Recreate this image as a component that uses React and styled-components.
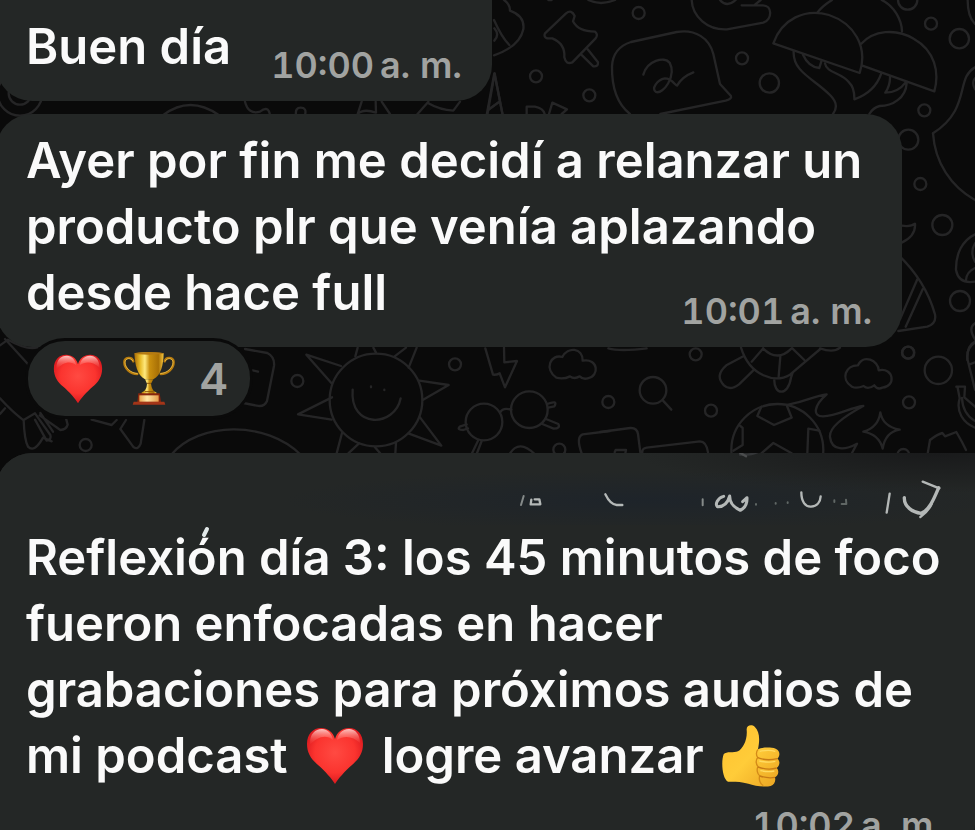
import React from "react";
import styled, { createGlobalStyle } from "styled-components";

const GlobalStyle = createGlobalStyle`
  * { box-sizing: border-box; }
  body {
    margin: 0;
    background: #0a0a0a;
    font-family: Inter, "Liberation Sans", sans-serif;
  }
`;

const Chat = styled.main`
  position: relative;
  height: 100vh;
  overflow: hidden;
  background: #0a0a0a;
`;

const Wallpaper = styled.svg`
  position: absolute;
  top: 0;
  left: 0;
  fill: none;
  stroke: #252526;
  stroke-width: 7;
  stroke-linecap: round;
  stroke-linejoin: round;
`;

const MessageList = styled.div`
  position: relative;
  display: flex;
  flex-direction: column;
  align-items: flex-start;
  margin-left: -4px;
`;

const Bubble = styled.article`
  position: relative;
  display: ${(p) => (p.$inline ? "flex" : "grid")};
  align-items: end;
  gap: ${(p) => (p.$inline ? "40px" : "0")};
  max-width: 100%;
  margin-top: ${(p) => (p.$first ? "0" : "13px")};
  padding: 14px 30px;
  border-radius: ${(p) => (p.$first ? "0 0 36px 36px" : "36px")};
  background: #242726;
`;

const Text = styled.p`
  grid-area: 1 / 1;
  margin: 0;
  padding-bottom: ${(p) => (p.$long ? "14px" : "7px")};
  padding-right: ${(p) => (p.$wide ? "10px" : "0")};
  color: #fafafa;
  font-size: 49px;
  font-weight: 600;
  line-height: 66px;
  white-space: nowrap;
`;

const Line = styled.span`
  display: flex;
  align-items: center;
  gap: ${(p) => (p.$gap ? "18px" : "0")};
`;

const Time = styled.time`
  grid-area: ${(p) => (p.$below ? "3 / 1" : "1 / 1")};
  justify-self: end;
  color: #a1a3a1;
  font-size: 36px;
  font-weight: 600;
  font-variant-numeric: tabular-nums;
  line-height: 44px;
  white-space: nowrap;
`;

const LongBubble = styled(Bubble)`
  width: 100%;
  margin-top: 34px;
  padding: 0 32px 14px 30px;
`;

const Header = styled.div`
  height: 72px;
  margin: 0 -32px 0 -30px;
  border-radius: 36px 0 0 0;
  background:
    radial-gradient(ellipse 360px 30px at 66% 66%, #1e242a, #1e242a00),
    radial-gradient(ellipse 300px 40px at 96% 0, #191a1b, #191a1b00),
    #242726;
`;

const Scribble = styled.svg`
  position: absolute;
  top: 0;
  left: 4px;
  fill: none;
  stroke: #b4b8b7;
  stroke-width: 7;
  stroke-linecap: round;
  stroke-linejoin: round;
`;

const LongText = styled(Text)`
  grid-area: 2 / 1;
`;

const Reactions = styled.button`
  position: relative;
  display: flex;
  align-items: center;
  gap: 20px;
  height: 81px;
  margin: -9px 0 0 29px;
  padding: 0 22px 0 25px;
  border: 3px solid #0a0a0a;
  border-radius: 40px;
  background: #242726;
  color: #a1a3a1;
  font: 600 44px/44px Inter, "Liberation Sans", sans-serif;
`;

const Count = styled.span`
  margin-left: 4px;
`;

function Heart({ size, id }) {
  return (
    <svg width={size} height={size} viewBox="0 0 58 58" role="img" aria-label="Corazón">
      <defs>
        <radialGradient id={id} cx="50%" cy="44%" r="60%">
          <stop offset="0" stopColor="#ff4a42" />
          <stop offset="0.6" stopColor="#fb342f" />
          <stop offset="1" stopColor="#d5141b" />
        </radialGradient>
        <linearGradient id={`${id}-shine`} x1="0" y1="0" x2="0" y2="1">
          <stop offset="0" stopColor="#ffd9d5" stopOpacity="0.9" />
          <stop offset="1" stopColor="#ff5a50" stopOpacity="0" />
        </linearGradient>
      </defs>
      <path d="M29 57C26 52 19 44 12 38C5 32 1 26 1 17C1 7 7 1 15 1C22 1 27 5 29 12C31 5 36 1 43 1C51 1 57 7 57 17C57 26 53 32 46 38C39 44 32 52 29 57Z" fill={`url(#${id})`} />
      <path d="M4 16C4 7 9 2 16 2C22 2 26 7 27 13C20 7 11 10 4 18ZM31 13C32 7 36 2 43 2C49 2 54 7 54 16C47 9 38 8 31 13Z" fill={`url(#${id}-shine)`} />
    </svg>
  );
}

function Trophy() {
  return (
    <svg width="52" height="53" viewBox="0 0 156 159" role="img" aria-label="Trofeo">
      <defs>
        <linearGradient id="gold" x1="0" x2="1">
          <stop offset="0" stopColor="#a86c06" />
          <stop offset="0.2" stopColor="#e8bb28" />
          <stop offset="0.36" stopColor="#ffe97e" />
          <stop offset="0.52" stopColor="#c98f0e" />
          <stop offset="0.82" stopColor="#a87006" />
          <stop offset="1" stopColor="#f5c63e" />
        </linearGradient>
        <linearGradient id="plate">
          <stop offset="0" stopColor="#e8a34c" />
          <stop offset="0.4" stopColor="#ffe6a4" />
          <stop offset="1" stopColor="#e79b4a" />
        </linearGradient>
      </defs>
      <g fill="none" strokeLinecap="round">
        <path d="M43 66C21 66 4 49 4 31C4 15 27 13 31 28" stroke="#b87c0e" strokeWidth="7" />
        <path d="M113 66C135 66 152 49 152 31C152 15 129 13 125 28" stroke="#b87c0e" strokeWidth="7" />
        <path d="M43 65C23 63 6 47 6 31C6 18 24 16 29 26M113 65C133 63 150 47 150 31C150 18 132 16 127 26" stroke="#f7ce57" strokeWidth="2" />
      </g>
      <path d="M34 4Q78-3 122 4C121 40 114 70 91 82H66C43 70 36 40 34 4Z" fill="url(#gold)" />
      <ellipse cx="78" cy="4" rx="44" ry="4" fill="#b67b12" />
      <path d="M66 82H91L84 95C86 106 88 116 100 121V128H56V121C69 116 71 106 72 95Z" fill="url(#gold)" />
      <path d="M72 94H84M65 119H92" stroke="#8b5409" strokeWidth="3" />
      <path d="M46 124H110L114 150H43Z" fill="#88250d" />
      <path d="M32 149H124L127 158H29Z" fill="#a33518" />
      <path d="M49 130H107V149H49Z" fill="url(#plate)" />
    </svg>
  );
}

function ThumbsUp() {
  return (
    <svg width="58" height="62" viewBox="0 0 174 186" role="img" aria-label="Pulgar arriba">
      <defs>
        <linearGradient id="thumb" x1="0" y1="0" x2="1" y2="1">
          <stop offset="0" stopColor="#ffc12e" />
          <stop offset="0.5" stopColor="#ffcc39" />
          <stop offset="1" stopColor="#eaa321" />
        </linearGradient>
      </defs>
      <path d="M5 88C13 78 36 85 48 79C63 70 77 45 74 14C73 0 89-3 98 5C113 19 114 43 108 73C120 67 145 66 161 71C175 76 175 94 166 101C176 108 173 124 164 129C172 137 170 151 159 157C162 169 157 179 146 183C127 188 98 182 79 176C54 169 36 170 18 170C0 161-3 108 5 88Z" fill="url(#thumb)" />
      <path d="M108 73C102 80 102 91 107 97C101 106 102 117 108 125C103 134 106 146 113 152C110 164 114 177 124 182" fill="none" stroke="#d48b18" strokeWidth="4" />
      <path d="M107 98C125 105 146 106 166 101M108 126C128 133 147 134 164 129M113 153C129 158 145 160 159 157" fill="none" stroke="#c77b16" strokeWidth="4" />
      <path d="M113 79Q140 73 160 79M112 108Q142 114 160 109M115 137Q139 142 157 138" fill="none" stroke="#ffdb62" strokeWidth="4" />
    </svg>
  );
}

function Doodles() {
  return (
    <Wallpaper width="975" height="830" viewBox="0 0 975 830" aria-hidden="true">
      <g transform="scale(.333333)">
        <circle cx="60" cy="280" r="67" /><circle cx="60" cy="280" r="34" />
        <path d="M490 345Q570 285 656 345M735 305Q745 345 780 335Q805 315 810 345M888 345Q885 323 902 323Q921 323 915 345M1085 305L1073 342Q1090 325 1128 338L1127 305M1145 305L1170 342M1285 305L1250 345M1285 310Q1320 330 1360 332L1380 305M1462 345L1484 220L1508 345M1464 330L1496 307" />
      </g>
      <g transform="translate(480) scale(.333333)">
        <path d="M72 0Q90 12 90 32Q135 48 130 88Q119 140 42 166M42 60Q65 112 88 135M43 85Q60 104 43 122M20 345L43 220L68 345M24 330L55 307" />
        <path d="M205 0H215M325 0Q362 18 405 0" />
        <path d="M195 100L258 40Q275 27 284 48L279 64Q295 95 345 95Q356 104 346 116L277 187Q258 195 253 172Q256 131 217 115H202Q190 111 195 100ZM304 164L340 199Q355 201 354 187L323 148" />
        <circle cx="476" cy="39" r="18" /><circle cx="168" cy="229" r="18" /><circle cx="328" cy="286" r="18" />
        <path d="M635 0C637 50 683 91 741 88L850 68C878 58 877 16 849 16H785M825 14L842 0M720 0Q740 24 767 0" />
        <path d="M450 342C414 314 395 264 396 199C398 158 422 136 453 126L590 96C646 86 688 115 700 162L720 252L753 288Q756 297 737 302L541 342" />
        <path d="M490 224C501 182 553 168 569 188C590 228 550 283 528 276C512 267 532 239 554 235C577 235 586 257 591 257C603 235 622 224 640 217" />
        <circle cx="786" cy="175" r="18" /><circle cx="868" cy="249" r="29" /><circle cx="1283" cy="0" r="29" /><circle cx="1353" cy="71" r="18" /><circle cx="1438" cy="116" r="29" /><circle cx="1333" cy="331" r="18" />
        <path d="M880 130C906 57 975 24 1047 45C1122 70 1165 140 1139 219ZM1012 38C1026 19 1043 8 1056 0M1205 0C1243 18 1265 60 1266 94M1143 132C1180 91 1247 84 1301 116C1365 152 1379 217 1363 274L1147 197" />
        <path d="M941 154C938 215 1000 235 1050 285Q1080 314 1059 342M969 164Q985 200 1018 204L1024 184M1035 190C1040 220 1083 216 1107 247Q1124 263 1123 298Q1185 276 1204 220M1230 230Q1231 255 1216 278C1243 278 1263 266 1277 247M1280 250C1277 294 1238 318 1199 318Q1179 323 1168 342M1359 400C1475 325 1425 235 1485 202M1485 235Q1474 247 1485 268M1463 0Q1463 50 1485 72" />
        <path d="M140 342V320H165Q190 325 194 342M207 342L217 308L261 328L245 342" />
      </g>
      <g transform="translate(860 90) scale(.333333)">
        <path d="M219 130C225 218 273 290 345 330" />
        <circle cx="145" cy="149" r="30" /><circle cx="181" cy="282" r="18" /><circle cx="247" cy="405" r="30" /><circle cx="300" cy="633" r="30" /><circle cx="145" cy="788" r="18" />
        <path d="M125 407Q153 411 165 401Q168 438 125 458M110 490Q196 570 225 673Q230 701 202 710L115 723M172 568L120 688M188 598L137 710M345 433C307 451 287 491 288 540Q296 583 345 575M345 534Q320 545 318 570M345 460Q329 487 345 515M345 700Q323 714 345 748M345 755Q320 767 322 810" />
      </g>
      <g transform="translate(0 330) scale(.333333)">
        <path d="M0 46L24 29Q80 61 112 52M15 27L87 106M0 205Q36 245 71 271M0 252L15 235M71 270Q73 330 84 350Q103 370 129 323L155 334M71 270L105 250L151 315Q155 329 140 332L105 269M121 249L159 305M119 256L181 300Q199 299 203 284L198 265M275 269L335 285L350 270M378 270L361 297L401 352Q415 360 422 341L433 270M513 375C597 274 799 271 903 375" />
        <circle cx="257" cy="345" r="18" />
      </g>
      <g transform="translate(240 335) scale(.333333)">
        <path d="M15 42L82 54Q105 66 102 93L81 198Q73 217 50 212L10 204M38 106L54 110" />
        <circle cx="172" cy="138" r="18" /><circle cx="408" cy="195" r="139" />
        <path d="M353 38L346 64M400 38L408 53M498 38L463 65M530 38L506 98M303 93L199 59L276 146M276 187L174 238L275 254M538 137L626 150L548 195M540 247L604 332L505 295M306 294L290 355M357 325L325 355M405 337L423 358M468 323L466 355M338 164C328 283 465 277 482 190M393 154V157M433 164V165" />
        <circle cx="645" cy="88" r="18" /><path d="M736 40L759 119Q769 120 779 115L795 157L831 78L793 82L792 38" />
        <circle cx="732" cy="261" r="55" /><circle cx="868" cy="224" r="55" /><path d="M781 232Q788 217 814 224M680 268L659 275Q650 285 670 285L684 280M921 207Q955 194 943 214L925 218M918 252L955 267Q962 280 941 281L907 267M714 317L695 357M725 318L710 357M810 355Q837 312 884 357" />
        <circle cx="958" cy="344" r="18" /><path d="M949 128C912 102 931 56 967 66C983 34 1028 38 1028 77C1076 68 1079 125 1043 130Q1029 134 1019 124Q1003 134 990 124Q970 134 949 128M1025 355Q1007 306 1028 298L1110 288" />
      </g>
      <g transform="translate(600 335) scale(.333333)">
        <circle cx="25" cy="201" r="18" /><circle cx="287" cy="58" r="18" /><circle cx="159" cy="166" r="40" /><path d="M189 197L214 224" /><circle cx="333" cy="227" r="18" />
        <path d="M0 291L91 279Q111 278 114 297L121 352M127 352Q126 340 140 338L300 319Q319 319 324 352M44 352L47 345H78L76 355M25 40Q60 50 140 40" />
        <path d="M423 38C450 125 526 145 570 119L661 42M489 40Q532 83 575 40M455 80L490 40M541 65L536 124M613 75L577 40M430 64L379 91Q343 122 372 151Q390 168 417 148L460 106M523 131C520 182 565 185 573 128L578 113M660 40Q700 55 720 38" />
        <circle cx="532" cy="345" r="138" /><path d="M484 215L472 243L522 270L575 248L561 213M484 355L520 324L575 355M420 272L428 279V330L400 347M622 355L625 281L658 287M565 209C623 198 641 183 680 178C642 211 636 244 669 244C713 243 749 218 790 213C719 251 687 280 690 306C695 350 736 345 771 326L756 354" />
        <path d="M756 155C719 132 738 90 774 91C789 56 836 76 836 106C882 96 889 155 847 158Q832 165 823 151Q803 165 791 153Q769 162 756 155Z" />
        <circle cx="924" cy="53" r="18" /><circle cx="1015" cy="106" r="41" /><circle cx="927" cy="202" r="18" /><circle cx="910" cy="360" r="18" />
        <path d="M841 232Q848 274 899 284Q856 291 848 341Q837 298 790 290Q835 277 841 232ZM983 356L990 315Q1012 298 1027 294L1035 304L1069 291L1086 321L1098 345M1069 155H1095L1093 187L1125 215M1073 158L1079 190C1067 230 1090 264 1125 278M1086 189Q1088 236 1125 258M1125 23Q1097 40 1103 75L1125 164M1109 88L1125 82" />
      </g>
    </Wallpaper>
  );
}

function HeaderScribble() {
  return (
    <Scribble width="971" height="90" viewBox="0 0 971 90" aria-hidden="true">
      <g transform="translate(500 -3) scale(.333333)">
        <path d="M71 138L63 165M608 148V166" stroke="#858a89" strokeWidth="6" />
        <path d="M94 149L92 163H121L118 148H104" strokeWidth="7" />
        <path d="M316 133Q331 164 350 165H367" />
        <path d="M671 139C652 144 645 163 652 170C673 171 684 156 689 138C689 160 700 171 721 181C735 174 742 160 741 143L728 155" strokeWidth="9" />
        <path d="M720 14Q755 16 775 5" stroke="#343638" />
      </g>
      <g transform="translate(740 -3) scale(.333333)">
        <path d="M184 127C184 155 196 171 213 170C231 169 241 156 242 139" />
        <path d="M305 162H319L318 149M283 151V156M48 162V164M107 159V161M143 157V159" stroke="#606765" strokeWidth="6" />
        <path d="M449 131L440 188" />
        <path d="M493 143C492 171 519 187 543 190C568 182 583 144 596 113" strokeWidth="10" />
        <path d="M548 95L598 115M541 201Q566 183 575 162" />
        <path d="M0 8L18 19" stroke="#4b4d4e" />
      </g>
      <path d="M207 76L204 82" strokeWidth="4" stroke="#e1e8e8" />
    </Scribble>
  );
}

export default function App() {
  return (
    <>
      <GlobalStyle />
      <Chat>
        <Doodles />
        <MessageList>
          <Bubble $inline $first>
            <Text>Buen día</Text>
            <Time dateTime="10:00">10:00&#8239;a. m.</Time>
          </Bubble>
          <Bubble>
            <Text $wide>
              <Line>Ayer por fin me decidí a relanzar un</Line>
              <Line>producto plr que venía aplazando</Line>
              <Line>desde hace full</Line>
            </Text>
            <Time dateTime="10:01">10:01&#8239;a. m.</Time>
          </Bubble>
          <Reactions type="button" aria-label="4 reacciones">
            <Heart size={50} id="heart-reaction" />
            <Trophy />
            <Count>4</Count>
          </Reactions>
          <LongBubble>
            <Header />
            <LongText $long>
              <Line>Reflexión día 3: los 45 minutos de foco</Line>
              <Line>fueron enfocadas en hacer</Line>
              <Line>grabaciones para próximos audios de</Line>
              <Line $gap>
                <span>mi podcast</span>
                <Heart size={58} id="heart-message" />
                <span>logre avanzar</span>
                <ThumbsUp />
              </Line>
            </LongText>
            <Time $below dateTime="10:02">10:02&#8239;a. m.</Time>
            <HeaderScribble />
          </LongBubble>
        </MessageList>
      </Chat>
    </>
  );
}
